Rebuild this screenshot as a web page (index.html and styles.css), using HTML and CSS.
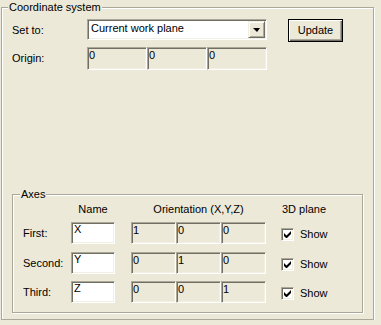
FILE: index.html
```html
<!DOCTYPE html>
<html>
    <head>
        <meta charset="UTF-8">
        <link rel="stylesheet" href="styles.css">
        <title>Coordinate system</title>
    </head>
    <body>

        <fieldset class="group outer">
            <legend>Coordinate system</legend>
            <div class="outer-body">

                <div class="top-grid">
                    <div class="label">Set to:</div>
                    <div class="combo">
                        <div class="combo-text">Current work plane</div>
                        <div class="combo-btn"><span class="arrow"></span></div>
                    </div>
                    <div class="button">Update</div>

                    <div class="label">Origin:</div>
                    <div class="triple wide">
                        <div class="field ro">0</div>
                        <div class="field ro">0</div>
                        <div class="field ro">0</div>
                    </div>
                </div>

                <fieldset class="group axes">
                    <legend>Axes</legend>
                    <div class="axes-grid">
                        <div></div>
                        <div class="head center">Name</div>
                        <div class="head center">Orientation (X,Y,Z)</div>
                        <div class="head">3D plane</div>

                        <div class="label">First:</div>
                        <div class="field name">X</div>
                        <div class="triple">
                            <div class="field ro">1</div>
                            <div class="field ro">0</div>
                            <div class="field ro">0</div>
                        </div>
                        <div class="check"><span class="box"><svg width="7" height="7" viewBox="0 0 7 7"><path d="M0 2v3l2 2h1l4-4V0L2.5 4.5z" fill="#000"/></svg></span>Show</div>

                        <div class="label">Second:</div>
                        <div class="field name">Y</div>
                        <div class="triple">
                            <div class="field ro">0</div>
                            <div class="field ro">1</div>
                            <div class="field ro">0</div>
                        </div>
                        <div class="check"><span class="box"><svg width="7" height="7" viewBox="0 0 7 7"><path d="M0 2v3l2 2h1l4-4V0L2.5 4.5z" fill="#000"/></svg></span>Show</div>

                        <div class="label">Third:</div>
                        <div class="field name">Z</div>
                        <div class="triple">
                            <div class="field ro">0</div>
                            <div class="field ro">0</div>
                            <div class="field ro">1</div>
                        </div>
                        <div class="check"><span class="box"><svg width="7" height="7" viewBox="0 0 7 7"><path d="M0 2v3l2 2h1l4-4V0L2.5 4.5z" fill="#000"/></svg></span>Show</div>
                    </div>
                </fieldset>

            </div>
        </fieldset>

    </body>
</html>
```

FILE: styles.css
```css
body {
    margin: 0;
    padding: 1px 0 0 0;
    background: #ece9d8;
    font-family: "Liberation Sans", Arial, sans-serif;
    font-size: 11px;
    line-height: 13px;
    color: #000;
}

/* etched group box */
.group {
    margin: 0;
    padding: 0;
    min-inline-size: 0;
    box-sizing: border-box;
    border: 1px solid #aca899;
    box-shadow: inset 1px 1px 0 #fff, 1px 1px 0 #fff;
}
.group legend {
    padding: 0 1px;
    line-height: 13px;
    background: #ece9d8;
}

.outer {
    margin-left: 1px;
    width: 373px;
    height: 319px;
}
.outer legend {
    margin-left: 6px;
}
.outer-body {
    display: flex;
    flex-direction: column;
    height: 100%;
    padding: 5px 0 6px 10px;
    box-sizing: border-box;
}

.top-grid {
    display: grid;
    grid-template-columns: 75px 180px 76px;
    grid-template-rows: 23px 23px;
    row-gap: 5px;
}
.label {
    align-self: center;
}

/* sunken fields */
.field {
    box-sizing: border-box;
    border: 1px solid;
    border-color: #aca899 #fff #fff #aca899;
    box-shadow: inset 1px 1px 0 #716f64, inset -1px -1px 0 #f1efe2;
    height: 23px;
    padding: 1px 0 0 1px;
    overflow: hidden;
}
.field.name {
    height: 22px;
    padding: 0 0 0 2px;
    background: #fff;
}

.triple {
    display: flex;
}
.triple .field {
    width: 45px;
    height: 22px;
}
.triple.wide .field {
    width: 60px;
    height: 23px;
}

.combo {
    display: flex;
    align-self: start;
    height: 21px;
    box-sizing: border-box;
    border: 1px solid;
    border-color: #aca899 #fff #fff #aca899;
    box-shadow: inset 1px 1px 0 #716f64, inset -1px -1px 0 #f1efe2;
    background: #fff;
    padding: 1px;
}
.combo-text {
    flex: 1;
    padding: 1px 0 0 2px;
}
.combo-btn {
    width: 17px;
    height: 17px;
    box-sizing: border-box;
    background: #ece9d8;
    border: 1px solid;
    border-color: #f1efe2 #716f64 #716f64 #f1efe2;
    box-shadow: inset 1px 1px 0 #fff, inset -1px -1px 0 #aca899;
    display: flex;
    align-items: center;
    justify-content: center;
}
.arrow {
    width: 0;
    height: 0;
    border-left: 4px solid transparent;
    border-right: 3px solid transparent;
    border-top: 4px solid #000;
    margin-top: 1px;
}

.button {
    box-sizing: border-box;
    height: 23px;
    margin-left: 21px;
    border: 1px solid #000;
    box-shadow: inset 1px 1px 0 #fff, inset -1px -1px 0 #716f64, inset -2px -2px 0 #aca899;
    display: flex;
    align-items: center;
    justify-content: center;
}

.axes {
    margin-top: auto;
    width: 351px;
}
.axes legend {
    margin-left: 7px;
}
.axes-grid {
    display: grid;
    grid-template-columns: 32px 44px 135px auto;
    grid-template-rows: 21px 30px 29px 22px;
    column-gap: 16px;
    padding: 0 0 9px 10px;
}
.axes-grid .label {
    align-self: start;
    padding-top: 5px;
}
.head {
    padding-top: 2px;
}
.center {
    text-align: center;
}

.check {
    display: flex;
    align-items: flex-start;
    padding-top: 6px;
    margin-left: -1px;
    gap: 6px;
}
.box {
    width: 13px;
    height: 13px;
    box-sizing: border-box;
    border: 1px solid;
    border-color: #aca899 #fff #fff #aca899;
    box-shadow: inset 1px 1px 0 #716f64, inset -1px -1px 0 #f1efe2;
    background: #fff;
    display: flex;
    align-items: center;
    justify-content: center;
}
```
